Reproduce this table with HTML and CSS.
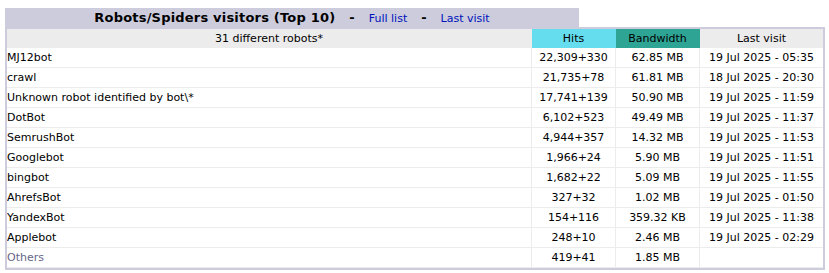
FILE: index.html
```html
<!DOCTYPE html>
<html>
<head>
<meta charset="utf-8">
<link rel="stylesheet" href="styles.css">
</head>
<body>
<div class="box">
  <div class="titlebar">
    <div class="title"><span class="tname">Robots/Spiders visitors (Top 10)</span><span class="sep">-</span><a href="#">Full list</a><span class="sep">-</span><a href="#">Last visit</a></div>
    <div class="blank"></div>
  </div>
  <div class="frame">
    <table class="data">
      <colgroup><col class="c1"><col class="c2"><col class="c3"><col class="c4"></colgroup>
      <tr class="head">
        <th class="first">31 different robots*</th>
        <th class="hits">Hits</th>
        <th class="bw">Bandwidth</th>
        <th class="last">Last visit</th>
      </tr>
      <tr><td class="name">MJ12bot</td><td>22,309+330</td><td>62.85 MB</td><td class="last">19 Jul 2025 - 05:35</td></tr>
      <tr><td class="name">crawl</td><td>21,735+78</td><td>61.81 MB</td><td class="last">18 Jul 2025 - 20:30</td></tr>
      <tr><td class="name">Unknown robot identified by bot\*</td><td>17,741+139</td><td>50.90 MB</td><td class="last">19 Jul 2025 - 11:59</td></tr>
      <tr><td class="name">DotBot</td><td>6,102+523</td><td>49.49 MB</td><td class="last">19 Jul 2025 - 11:37</td></tr>
      <tr><td class="name">SemrushBot</td><td>4,944+357</td><td>14.32 MB</td><td class="last">19 Jul 2025 - 11:53</td></tr>
      <tr><td class="name">Googlebot</td><td>1,966+24</td><td>5.90 MB</td><td class="last">19 Jul 2025 - 11:51</td></tr>
      <tr><td class="name">bingbot</td><td>1,682+22</td><td>5.09 MB</td><td class="last">19 Jul 2025 - 11:55</td></tr>
      <tr><td class="name">AhrefsBot</td><td>327+32</td><td>1.02 MB</td><td class="last">19 Jul 2025 - 01:50</td></tr>
      <tr><td class="name">YandexBot</td><td>154+116</td><td>359.32 KB</td><td class="last">19 Jul 2025 - 11:38</td></tr>
      <tr><td class="name">Applebot</td><td>248+10</td><td>2.46 MB</td><td class="last">19 Jul 2025 - 02:29</td></tr>
      <tr><td class="name"><span class="others">Others</span></td><td>419+41</td><td>1.85 MB</td><td class="last">&nbsp;</td></tr>
    </table>
  </div>
</div>
</body>
</html>
```
FILE: styles.css
```css
html, body {
  margin: 0;
  padding: 0;
  background: #FFFFFF;
}
body {
  padding: 8px 4px 0 5px;
  font: 11px "DejaVu Sans", Verdana, sans-serif;
  color: #000000;
}
.box {
  width: 820px;
}
.titlebar {
  display: flex;
  height: 19px;
}
.title {
  width: 574px;
  box-sizing: border-box;
  padding-top: 1px;
  background: #CCCCDD;
  font: bold 13px "DejaVu Sans", Verdana, sans-serif;
  text-align: center;
  line-height: 18px;
  white-space: nowrap;
}
.title .tname {
  letter-spacing: 0.2px;
}
.title .sep {
  padding: 0 14px 0 14px;
}
.title a {
  font: 11px "DejaVu Sans", Verdana, sans-serif;
  color: #0011BB;
  text-decoration: none;
}
.blank {
  flex: 1;
  background: #FFFFFF;
}
.frame {
  background: #CCCCDD;
  padding: 2px;
}
.data {
  width: 816px;
  border-collapse: separate;
  border-spacing: 0;
  table-layout: fixed;
  background: #FFFFFF;
}
.c1 { width: 525px; }
.c2 { width: 84px; }
.c3 { width: 84px; }
.c4 { width: 123px; }
.data th, .data td {
  padding: 0;
  height: 19px;
  text-align: center;
  font-weight: normal;
  white-space: nowrap;
  overflow: hidden;
}
.data th {
  background: #ECECEC;
  border-right: 1px solid #ECECEC;
}
.data td {
  border-bottom: 1px solid #ECECEC;
  border-right: 1px solid #ECECEC;
}
.data .last {
  border-right: 0;
}
.data th.hits {
  background: #66DDEE;
  border-right-color: #66DDEE;
}
.data th.bw {
  background: #2EA495;
  border-right-color: #2EA495;
}
.data td.name {
  text-align: left;
  padding-left: 0;
}
.others {
  color: #666688;
}
```
